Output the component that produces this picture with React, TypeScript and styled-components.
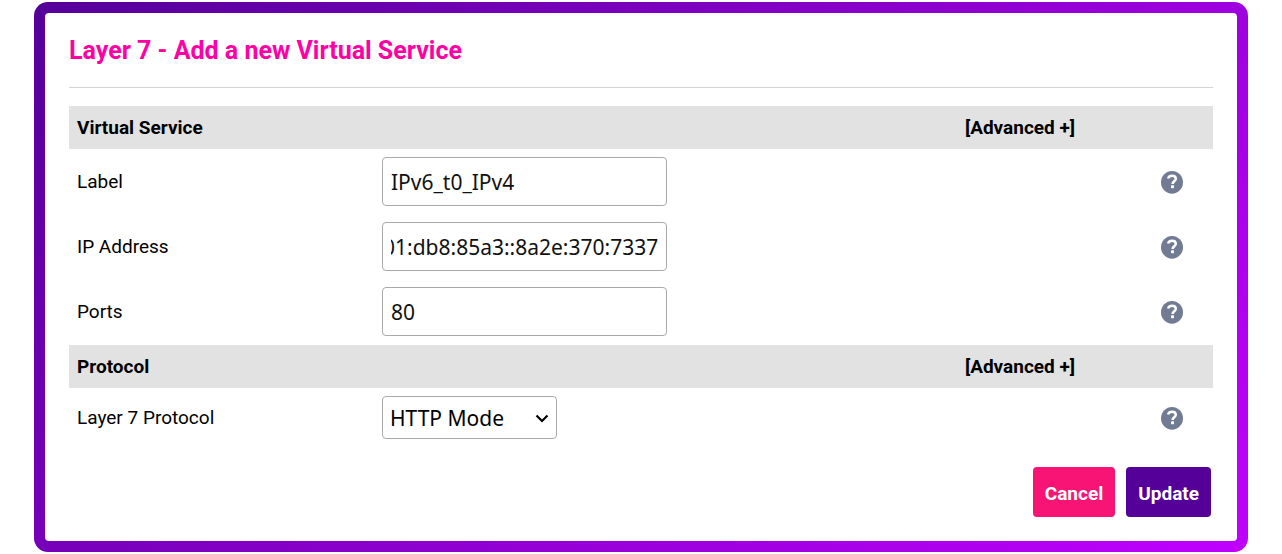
import React, { useEffect, useRef, useState } from "react";
import styled, { createGlobalStyle } from "styled-components";

const GlobalStyle = createGlobalStyle`
  *, *::before, *::after { box-sizing: border-box; }
  body {
    margin: 0;
    background: #fff;
    color: #000;
    font-family: Roboto, "Liberation Sans", sans-serif;
    font-size: 19px;
    line-height: 25px;
  }
`;

const Frame = styled.main`
  margin: 2px 34px;
  padding: 11px;
  border-radius: 14px;
  background: linear-gradient(135deg, #509 0%, #c000ff 100%);
`;

const Panel = styled.form`
  padding: 22px 24px 24px;
  border-radius: 4px;
  background: #fff;
`;

const Title = styled.h1`
  margin: 0 0 18px;
  padding-bottom: 20px;
  border-bottom: 1px solid #d3d3d3;
  color: #ff00a5;
  font-size: 25px;
  line-height: 32px;
  font-weight: 700;
`;

const Section = styled.section`
  padding-bottom: 1px;
`;

const Row = styled.div`
  display: grid;
  grid-template-columns: 313px minmax(0, 1fr) 222px 82px;
  align-items: center;
  padding: 8px 0;
`;

const SectionHeader = styled(Row)`
  height: 43px;
  background: #e2e2e2;
`;

const SectionTitle = styled.h2`
  grid-column: 1 / 3;
  margin: 0;
  padding-left: 8px;
  font-size: 19px;
  line-height: 25px;
  font-weight: 700;
`;

const AdvancedToggle = styled.button`
  justify-self: center;
  padding: 0;
  border: 0;
  background: none;
  color: inherit;
  font: inherit;
  font-weight: 700;
  cursor: pointer;
`;

const FieldLabel = styled.label`
  padding-left: 8px;
`;

const TextInput = styled.input`
  width: 285px;
  height: 49px;
  padding: 0 8px;
  border: 1px solid #aaa;
  border-radius: 4px;
  outline: none;
  background: #fff;
  color: #111;
  font-family: "Noto Sans", sans-serif;
  font-size: 21px;
`;

const SelectBox = styled.div`
  display: grid;
  width: 175px;
  align-items: center;

  > * { grid-area: 1 / 1; }
  > svg {
    justify-self: end;
    margin-right: 7px;
    pointer-events: none;
  }
`;

const Select = styled.select`
  width: 100%;
  height: 43px;
  padding: 0 32px 0 7px;
  border: 1px solid #aaa;
  border-radius: 4px;
  appearance: none;
  background: #fff;
  color: #000;
  font-family: "Noto Sans", sans-serif;
  font-size: 21px;
`;

const HelpButton = styled.button`
  grid-column: 4;
  justify-self: center;
  display: flex;
  padding: 0;
  border: 0;
  background: none;
  cursor: pointer;
`;

const Actions = styled.footer`
  display: flex;
  justify-content: flex-end;
  gap: 11px;
  padding: 19px 2px 0;
`;

const ActionButton = styled.button<{ $primary?: boolean }>`
  height: 50px;
  padding: 2px 12px 0;
  border: 0;
  border-radius: 4px;
  background: ${(p) => (p.$primary ? "#509" : "#f81474")};
  color: #fff;
  font: inherit;
  font-weight: 700;
  cursor: pointer;
`;

function Help({ topic }: { topic: string }) {
  return (
    <HelpButton type="button" aria-label={`Help: ${topic}`}>
      <svg width="24" height="24" viewBox="0 0 24 24" fill="none" aria-hidden="true">
        <ellipse cx="12" cy="12.3" rx="11" ry="11.4" fill="#717c94" />
        <path
          d="M8.1 8.500C8.500 6.500 10 5.700 12.100 5.700c2.300 0 3.700 1.200 3.700 3 0 2.500-3.200 2.600-3.200 5.300"
          stroke="#fff"
          strokeWidth="2.500"
        />
        <rect x="11" y="15.300" width="3" height="2.900" rx="0.600" fill="#fff" />
      </svg>
    </HelpButton>
  );
}

function Header({ title }: { title: string }) {
  return (
    <SectionHeader>
      <SectionTitle>{title}</SectionTitle>
      <AdvancedToggle type="button">[Advanced +]</AdvancedToggle>
    </SectionHeader>
  );
}

interface TextFieldProps {
  id: string;
  label: string;
  initial: string;
  showEnd?: boolean;
}

function TextField({ id, label, initial, showEnd }: TextFieldProps) {
  const [value, setValue] = useState(initial);
  const input = useRef<HTMLInputElement>(null);

  // Long values are scrolled so that their last characters stay visible.
  useEffect(() => {
    if (showEnd && input.current) {
      input.current.scrollLeft = input.current.scrollWidth;
    }
  }, [showEnd]);

  return (
    <Row>
      <FieldLabel htmlFor={id}>{label}</FieldLabel>
      <TextInput
        ref={input}
        id={id}
        type="text"
        spellCheck={false}
        value={value}
        onChange={(e) => setValue(e.target.value)}
      />
      <Help topic={label} />
    </Row>
  );
}

export default function App() {
  return (
    <>
      <GlobalStyle />
      <Frame>
        <Panel onSubmit={(e) => e.preventDefault()}>
          <Title>Layer 7 - Add a new Virtual Service</Title>
          <Section>
            <Header title="Virtual Service" />
            <TextField id="label" label="Label" initial="IPv6_t0_IPv4" />
            <TextField id="ip" label="IP Address" initial="2001:db8:85a3::8a2e:370:7337" showEnd />
            <TextField id="ports" label="Ports" initial="80" />
          </Section>
          <Section>
            <Header title="Protocol" />
            <Row>
              <FieldLabel htmlFor="protocol">Layer 7 Protocol</FieldLabel>
              <SelectBox>
                <Select id="protocol" defaultValue="http">
                  <option value="http">HTTP Mode</option>
                  <option value="tcp">TCP Mode</option>
                </Select>
                <svg width="16" height="16" viewBox="0 0 16 16" fill="none" aria-hidden="true">
                  <path d="M2.500 5.500 8 11l5.500-5.500" stroke="#000" strokeWidth="2.200" />
                </svg>
              </SelectBox>
              <Help topic="Layer 7 Protocol" />
            </Row>
          </Section>
          <Actions>
            <ActionButton type="button">Cancel</ActionButton>
            <ActionButton type="submit" $primary>
              Update
            </ActionButton>
          </Actions>
        </Panel>
      </Frame>
    </>
  );
}
